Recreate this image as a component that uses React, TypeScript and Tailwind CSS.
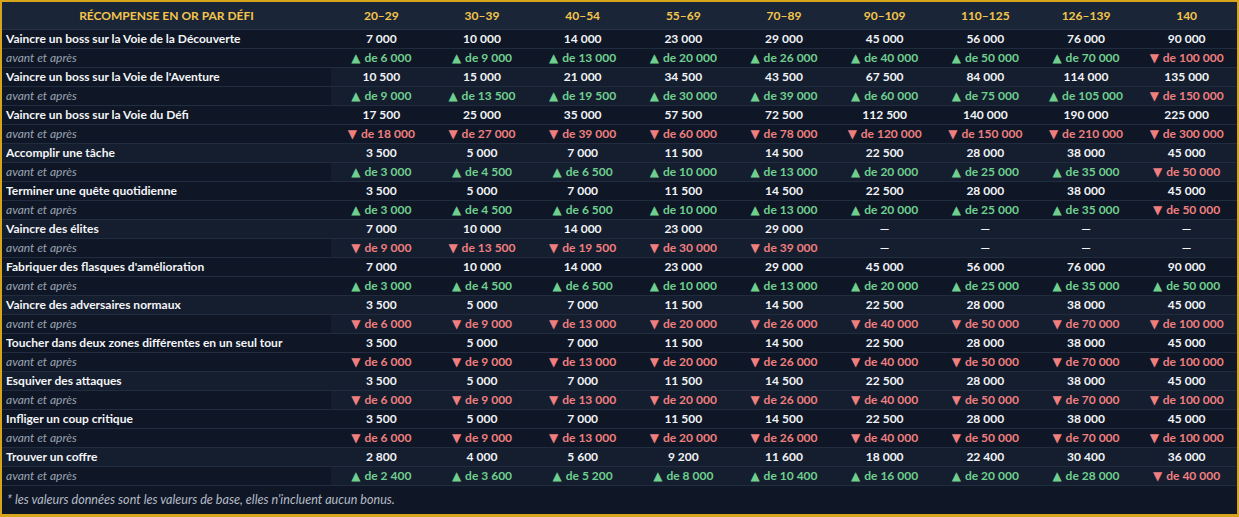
import React from "react";

type Sub = string;

const N = "\u202F";
const f = (s: string) => s.replace(/ /g, N);

interface Task {
  name: string;
  vals: string[];
  subs: string[];
}

const easy = ["3 500", "5 000", "7 000", "11 500", "14 500", "22 500", "28 000", "38 000", "45 000"];
const mid = ["7 000", "10 000", "14 000", "23 000", "29 000", "45 000", "56 000", "76 000", "90 000"];
const downEasy = ["d6 000", "d9 000", "d13 000", "d20 000", "d26 000", "d40 000", "d50 000", "d70 000", "d100 000"];
const upA = ["u3 000", "u4 500", "u6 500", "u10 000", "u13 000", "u20 000", "u25 000", "u35 000"];

const tasks: Task[] = [
  {
    name: "Vaincre un boss sur la Voie de la Découverte",
    vals: mid,
    subs: ["u6 000", "u9 000", "u13 000", "u20 000", "u26 000", "u40 000", "u50 000", "u70 000", "d100 000"],
  },
  {
    name: "Vaincre un boss sur la Voie de l'Aventure",
    vals: ["10 500", "15 000", "21 000", "34 500", "43 500", "67 500", "84 000", "114 000", "135 000"],
    subs: ["u9 000", "u13 500", "u19 500", "u30 000", "u39 000", "u60 000", "u75 000", "u105 000", "d150 000"],
  },
  {
    name: "Vaincre un boss sur la Voie du Défi",
    vals: ["17 500", "25 000", "35 000", "57 500", "72 500", "112 500", "140 000", "190 000", "225 000"],
    subs: ["d18 000", "d27 000", "d39 000", "d60 000", "d78 000", "d120 000", "d150 000", "d210 000", "d300 000"],
  },
  { name: "Accomplir une tâche", vals: easy, subs: [...upA, "d50 000"] },
  { name: "Terminer une quête quotidienne", vals: easy, subs: [...upA, "d50 000"] },
  {
    name: "Vaincre des élites",
    vals: ["7 000", "10 000", "14 000", "23 000", "29 000", "—", "—", "—", "—"],
    subs: ["d9 000", "d13 500", "d19 500", "d30 000", "d39 000", "—", "—", "—", "—"],
  },
  { name: "Fabriquer des flasques d'amélioration", vals: mid, subs: [...upA, "u50 000"] },
  { name: "Vaincre des adversaires normaux", vals: easy, subs: downEasy },
  { name: "Toucher dans deux zones différentes en un seul tour", vals: easy, subs: downEasy },
  { name: "Esquiver des attaques", vals: easy, subs: downEasy },
  { name: "Infliger un coup critique", vals: easy, subs: downEasy },
  {
    name: "Trouver un coffre",
    vals: ["2 800", "4 000", "5 600", "9 200", "11 600", "18 000", "22 400", "30 400", "36 000"],
    subs: ["u2 400", "u3 600", "u5 200", "u8 000", "u10 400", "u16 000", "u20 000", "u28 000", "d40 000"],
  },
];

const headers = ["20–29", "30–39", "40–54", "55–69", "70–89", "90–109", "110–125", "126–139", "140"];

const DARK = "bg-[#0f1726]";
const LIGHT = "bg-[#151e2e]";

function SubCell({ s }: { s: Sub }) {
  if (s === "—") return <span className="font-bold text-[#f1f3f6]">—</span>;
  const up = s[0] === "u";
  const v = f(s.slice(1));
  return (
    <span className={up ? "font-bold text-[#6fcf8f]" : "font-bold text-[#ef7f7f]"}>
      <span className="text-[12px] mr-[1px]" style={{ fontFamily: "'DejaVu Sans', sans-serif" }}>
        {up ? "▲" : "▼"}
      </span>{" "}
      de {v}
    </span>
  );
}

export default function App() {
  const font = { fontFamily: "Lato, 'Noto Sans', sans-serif" };
  return (
    <div
      className="w-[1239px] h-[517px] border-2 border-b-[3px] border-[#d6a51c] bg-[#0f1726] flex flex-col text-[12px] leading-none"
      style={font}
    >
      <div className="grid grid-cols-[329px_repeat(9,minmax(0,1fr))] h-[28px] bg-[#1b2538] border-b border-[#26334a] items-center">
        <div className="text-center font-bold text-[#f3c54a]">RÉCOMPENSE EN OR PAR DÉFI</div>
        {headers.map((h) => (
          <div key={h} className="text-center font-bold text-[#f3c54a]">
            {h}
          </div>
        ))}
      </div>
      {tasks.map((t, ti) => {
        const odd = ti % 2 === 1;
        const titleLeft = odd && ti !== 1 ? LIGHT : DARK;
        const right = odd ? LIGHT : DARK;
        return (
          <React.Fragment key={ti}>
            <div className="grid grid-cols-[329px_repeat(9,minmax(0,1fr))] h-[19px] border-b border-[#212c3e]">
              <div className={`${titleLeft} flex items-center pl-[4px] font-bold text-[#f4f5f7] whitespace-nowrap`}>
                {t.name}
              </div>
              {t.vals.map((v, i) => (
                <div key={i} className={`${right} flex items-center justify-center font-bold text-[#f1f3f6]`}>
                  {f(v)}
                </div>
              ))}
            </div>
            <div className="grid grid-cols-[329px_repeat(9,minmax(0,1fr))] h-[19px] border-b border-[#212c3e]">
              <div className={`${DARK} flex items-center pl-[4px] italic text-[#9aa2b1]`}>avant et après</div>
              {t.subs.map((s, i) => (
                <div key={i} className={`${right} flex items-center justify-center`}>
                  <SubCell s={s} />
                </div>
              ))}
            </div>
          </React.Fragment>
        );
      })}
      <div className="flex-1 flex items-center pl-[5px] italic text-[12.6px] text-[#b4bac5]">
        * les valeurs données sont les valeurs de base, elles n'incluent aucun bonus.
      </div>
    </div>
  );
}
